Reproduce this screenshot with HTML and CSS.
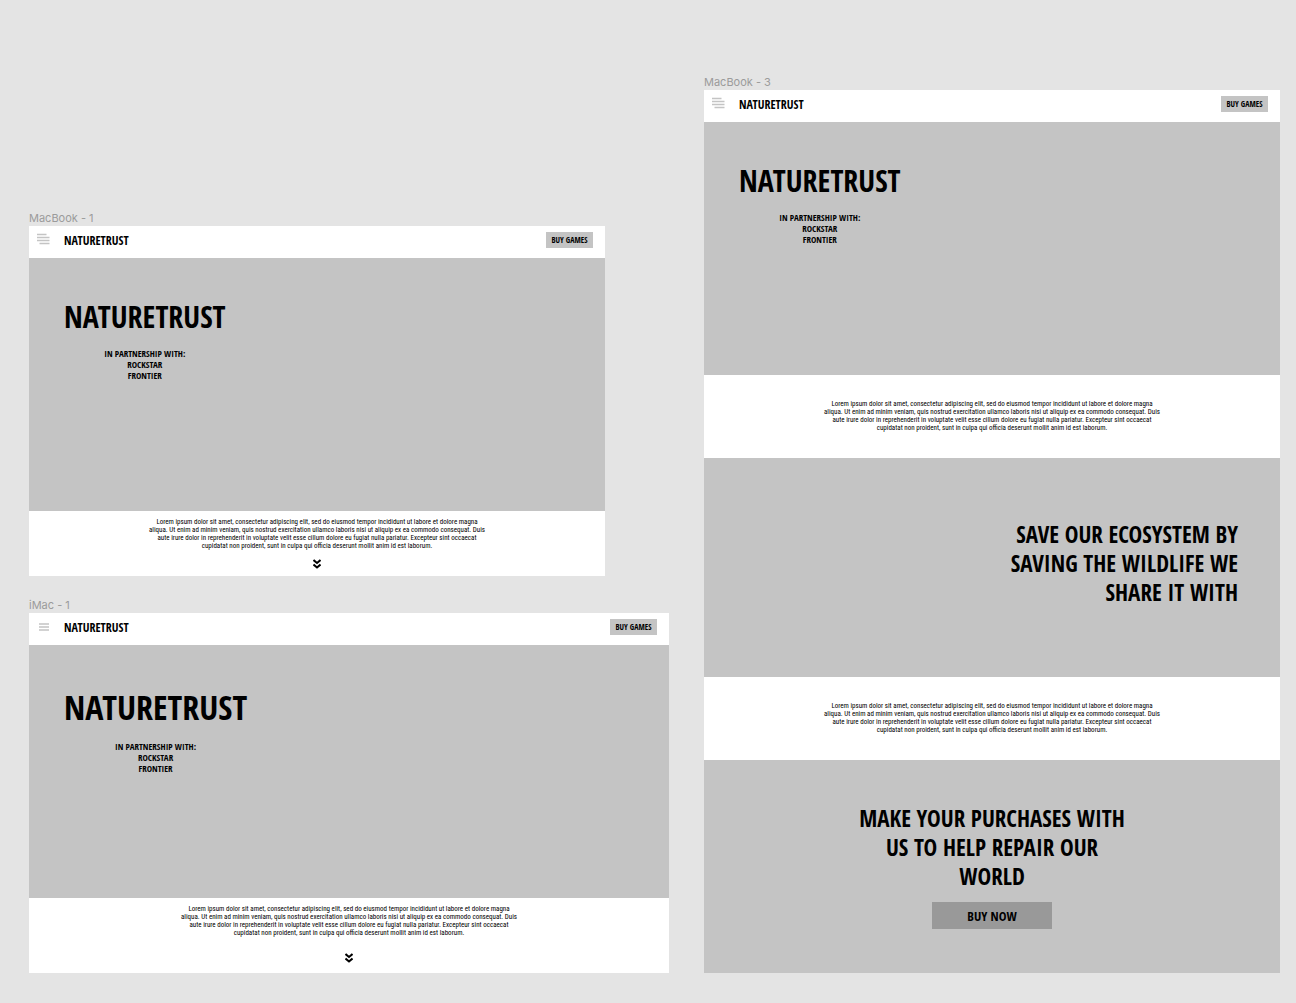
FILE: index.html
```html
<!DOCTYPE html>
<html lang="en">
<head>
<meta charset="utf-8">
<title>NatureTrust wireframes</title>
<link rel="stylesheet" href="styles.css">
</head>
<body>
<main class="canvas">
  <div class="column">
    <section class="artboard artboard-small">
      <h2 class="label">MacBook - 1</h2>
      <div class="frame">
        <header class="bar">
          <button class="menu" aria-label="Menu"><svg width="13" height="12" viewBox="0 0 13 12"><path d="M0 1.500h9.500M0 4.500h12.500M0 7.500h12.500M2.500 10.500h10"/></svg></button>
          <a class="brand" href="#">NATURETRUST</a>
          <button class="buy">BUY GAMES</button>
        </header>
        <div class="hero">
          <div class="intro">
            <h1 class="title">NATURETRUST</h1>
            <p class="partners">IN PARTNERSHIP WITH:<br>ROCKSTAR<br>FRONTIER</p>
          </div>
        </div>
        <div class="text text-short">
          <p class="copy">Lorem ipsum dolor sit amet, consectetur adipiscing elit, sed do eiusmod tempor incididunt ut labore et dolore magna<br>aliqua. Ut enim ad minim veniam, quis nostrud exercitation ullamco laboris nisi ut aliquip ex ea commodo consequat. Duis<br>aute irure dolor in reprehenderit in voluptate velit esse cillum dolore eu fugiat nulla pariatur. Excepteur sint occaecat<br>cupidatat non proident, sunt in culpa qui officia deserunt mollit anim id est laborum.</p>
          <svg class="more" width="8" height="10" viewBox="0 0 8 10"><path d="M.5 1 4 4l3.500-3M.5 5.500 4 8.500l3.500-3"/></svg>
        </div>
      </div>
    </section>
    <section class="artboard">
      <h2 class="label">iMac - 1</h2>
      <div class="frame">
        <header class="bar">
          <button class="menu" aria-label="Menu"><svg width="13" height="12" viewBox="0 0 13 12"><path d="M2 4h10M2 7h10M2 10h10"/></svg></button>
          <a class="brand" href="#">NATURETRUST</a>
          <button class="buy">BUY GAMES</button>
        </header>
        <div class="hero">
          <div class="intro">
            <h1 class="title title-large">NATURETRUST</h1>
            <p class="partners">IN PARTNERSHIP WITH:<br>ROCKSTAR<br>FRONTIER</p>
          </div>
        </div>
        <div class="text text-medium">
          <p class="copy">Lorem ipsum dolor sit amet, consectetur adipiscing elit, sed do eiusmod tempor incididunt ut labore et dolore magna<br>aliqua. Ut enim ad minim veniam, quis nostrud exercitation ullamco laboris nisi ut aliquip ex ea commodo consequat. Duis<br>aute irure dolor in reprehenderit in voluptate velit esse cillum dolore eu fugiat nulla pariatur. Excepteur sint occaecat<br>cupidatat non proident, sunt in culpa qui officia deserunt mollit anim id est laborum.</p>
          <svg class="more" width="8" height="10" viewBox="0 0 8 10"><path d="M.5 1 4 4l3.500-3M.5 5.500 4 8.500l3.500-3"/></svg>
        </div>
      </div>
    </section>
  </div>
  <section class="artboard">
    <h2 class="label">MacBook - 3</h2>
    <div class="frame">
      <header class="bar">
        <button class="menu" aria-label="Menu"><svg width="13" height="12" viewBox="0 0 13 12"><path d="M0 1.500h9.500M0 4.500h12.500M0 7.500h12.500M2.500 10.500h10"/></svg></button>
        <a class="brand" href="#">NATURETRUST</a>
        <button class="buy">BUY GAMES</button>
      </header>
      <div class="hero">
        <div class="intro">
          <h1 class="title">NATURETRUST</h1>
          <p class="partners">IN PARTNERSHIP WITH:<br>ROCKSTAR<br>FRONTIER</p>
        </div>
      </div>
      <div class="text">
        <p class="copy">Lorem ipsum dolor sit amet, consectetur adipiscing elit, sed do eiusmod tempor incididunt ut labore et dolore magna<br>aliqua. Ut enim ad minim veniam, quis nostrud exercitation ullamco laboris nisi ut aliquip ex ea commodo consequat. Duis<br>aute irure dolor in reprehenderit in voluptate velit esse cillum dolore eu fugiat nulla pariatur. Excepteur sint occaecat<br>cupidatat non proident, sunt in culpa qui officia deserunt mollit anim id est laborum.</p>
      </div>
      <div class="save">
        <h2 class="heading">SAVE OUR ECOSYSTEM BY<br>SAVING THE WILDLIFE WE<br>SHARE IT WITH</h2>
      </div>
      <div class="text">
        <p class="copy">Lorem ipsum dolor sit amet, consectetur adipiscing elit, sed do eiusmod tempor incididunt ut labore et dolore magna<br>aliqua. Ut enim ad minim veniam, quis nostrud exercitation ullamco laboris nisi ut aliquip ex ea commodo consequat. Duis<br>aute irure dolor in reprehenderit in voluptate velit esse cillum dolore eu fugiat nulla pariatur. Excepteur sint occaecat<br>cupidatat non proident, sunt in culpa qui officia deserunt mollit anim id est laborum.</p>
      </div>
      <div class="purchase">
        <h2 class="heading">MAKE YOUR PURCHASES WITH<br>US TO HELP REPAIR OUR<br>WORLD</h2>
        <button class="buy-now">BUY NOW</button>
      </div>
    </div>
  </section>
</main>
</body>
</html>
```
FILE: styles.css
```css
* { box-sizing: border-box; margin: 0; }
body {
  background: #e4e4e4;
  color: #000;
  font-family: "Open Sans Condensed", "Open Sans", sans-serif;
}
button { border: 0; padding: 0; font: inherit; color: inherit; }
.canvas {
  display: grid;
  grid-template-columns: 640fr 576fr;
  column-gap: 35px;
  align-items: end;
  padding: 74px 16px 30px 29px;
}
.column { display: flex; flex-direction: column; gap: 21px; }
.artboard-small { width: 90%; }
.label {
  color: #9b9b9b;
  font: 400 11px/16px Inter, sans-serif;
}
.frame { background: #fff; }
.bar {
  display: flex;
  align-items: center;
  height: 32px;
  padding: 0 12px 0 8px;
}
.menu { display: flex; padding-bottom: 6px; background: none; }
.menu path { stroke: #c4c4c4; stroke-width: 1.5; }
.brand {
  margin: 0 auto 0 14px;
  padding-bottom: 2px;
  color: inherit;
  font-size: 12px;
  font-weight: 700;
  line-height: 16px;
  text-decoration: none;
}
.buy {
  width: 47px;
  height: 16px;
  margin-bottom: 4px;
  background: #c4c4c4;
  font-size: 8px;
  font-weight: 700;
  line-height: 16px;
}
.hero {
  min-height: 253px;
  padding: 38px 35px;
  background: #c4c4c4;
}
.intro { width: fit-content; text-align: center; }
.title { font-size: 30px; line-height: 42px; margin-bottom: 10px; }
.title-large { font-size: 34px; line-height: 48px; }
.partners { font-size: 9px; font-weight: 700; line-height: 11px; }
.text {
  display: flex;
  flex-direction: column;
  align-items: center;
  min-height: 83px;
  padding-top: 25px;
}
.text-short { min-height: 65px; padding-top: 7px; gap: 9px; }
.text-medium { min-height: 75px; padding-top: 7px; gap: 16px; }
.copy {
  font-family: "Roboto Condensed", Roboto, sans-serif;
  font-size: 7px;
  line-height: 8px;
  text-align: center;
  white-space: nowrap;
}
.more path { fill: none; stroke: #000; stroke-width: 2; }
.heading { font-size: 23px; line-height: 29px; }
.save {
  min-height: 219px;
  padding: 62px 42px;
  background: #c4c4c4;
  text-align: right;
}
.purchase {
  display: flex;
  flex-direction: column;
  align-items: center;
  gap: 11px;
  min-height: 213px;
  padding: 44px 20px;
  background: #c4c4c4;
  text-align: center;
}
.buy-now {
  width: 120px;
  height: 27px;
  background: #999;
  font-size: 13px;
  font-weight: 700;
}
```
